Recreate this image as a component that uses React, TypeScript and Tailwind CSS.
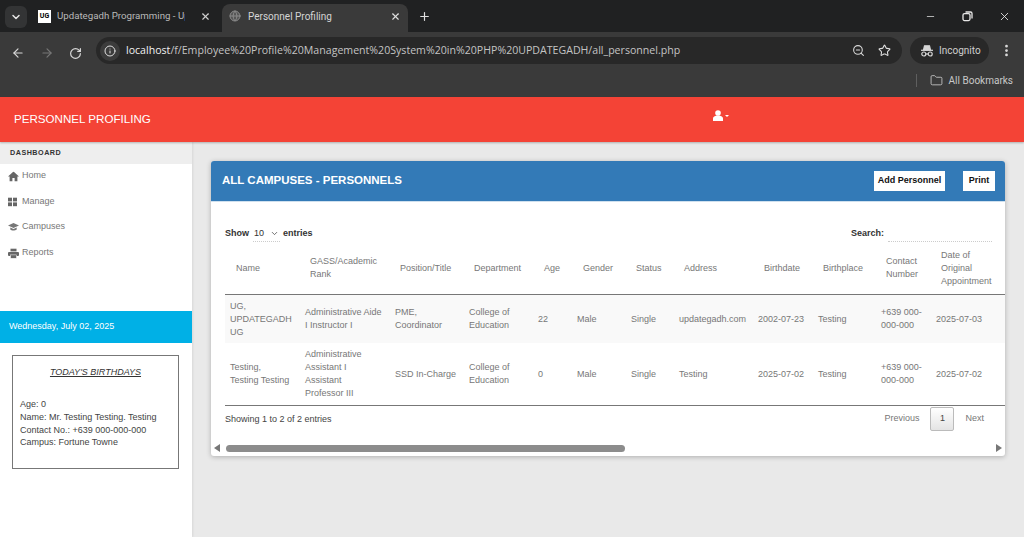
import React from "react";
import { ArrowLeft, ArrowRight, RotateCw, Info, ZoomOut, Star, X, Plus, ChevronDown, Minus, MoreVertical, Folder, Globe } from "lucide-react";

const cols = [75, 90, 74, 69, 39, 54, 48, 79, 60, 63, 55, 74];
const heads: [string[], number][] = [
  [["Name"], 11], [["GASS/Academic", "Rank"], 10], [["Position/Title"], 10], [["Department"], 10], [["Age"], 11], [["Gender"], 11],
  [["Status"], 10], [["Address"], 10], [["Birthdate"], 11], [["Birthplace"], 10], [["Contact", "Number"], 10], [["Date of", "Original", "Appointment"], 10],
];
const rows: string[][][] = [
  [["UG,", "UPDATEGADH", "UG"], ["Administrative Aide", "I Instructor I"], ["PME,", "Coordinator"], ["College of", "Education"], ["22"], ["Male"], ["Single"], ["updategadh.com"], ["2002-07-23"], ["Testing"], ["+639 000-", "000-000"], ["2025-07-03"]],
  [["Testing,", "Testing Testing"], ["Administrative", "Assistant I", "Assistant", "Professor III"], ["SSD In-Charge"], ["College of", "Education"], ["0"], ["Male"], ["Single"], ["Testing"], ["2025-07-02"], ["Testing"], ["+639 000-", "000-000"], ["2025-07-02"]],
];

function Lines({ l }: { l: string[] }) {
  return <>{l.map((s) => <div key={s} className="whitespace-nowrap">{s}</div>)}</>;
}
function Incognito() {
  return (
    <svg width="14" height="14" viewBox="0 0 14 14" fill="none" stroke="#d5d5d5" strokeWidth="1.2">
      <path d="M3.5 6 L4.5 1.8 H9.5 L10.5 6 Z" fill="#d5d5d5" />
      <path d="M1 6.3 H13" />
      <circle cx="3.8" cy="10" r="2" />
      <circle cx="10.2" cy="10" r="2" />
      <path d="M5.8 10 H8.2" />
    </svg>
  );
}
function Restore() {
  return (
    <svg width="11" height="11" viewBox="0 0 11 11" fill="none" stroke="#e8e8e8" strokeWidth="1.3">
      <rect x="1" y="2.6" width="7" height="7" rx="1.5" />
      <path d="M3.5 1 H8.5 A1.5 1.5 0 0 1 10 2.5 V7.5" />
    </svg>
  );
}
function HomeI() {
  return <svg width="11" height="10" viewBox="0 0 11 10" fill="#666"><path d="M5.5 0 L0 5 H1.6 V10 H4.4 V6.6 H6.6 V10 H9.4 V5 H11 Z" /></svg>;
}
function GridI() {
  return <svg width="9" height="9" viewBox="0 0 9 9" fill="#666"><rect width="4" height="4" /><rect x="5" width="4" height="4" /><rect y="5" width="4" height="4" /><rect x="5" y="5" width="4" height="4" /></svg>;
}
function CapI() {
  return <svg width="11" height="9" viewBox="0 0 11 9" fill="#777"><path d="M5.5 0.5 L0 3 L5.5 5.5 L11 3 Z" /><path d="M2.3 5 V7 C3.5 8.4 7 8.4 8.7 7 V5 L5.5 6.5 Z" /></svg>;
}
function PrintI() {
  return <svg width="11" height="10" viewBox="0 0 11 10" fill="#666"><rect x="2.5" y="0" width="6" height="3" /><rect x="0" y="3.5" width="11" height="4" rx="1" /><rect x="2.5" y="6.5" width="6" height="3.5" stroke="#fff" strokeWidth="0.5" /></svg>;
}

export default function App() {
  const nav: [React.ReactNode, string][] = [[<HomeI />, "Home"], [<GridI />, "Manage"], [<CapI />, "Campuses"], [<PrintI />, "Reports"]];
  return (
    <div className="w-[1024px] h-[537px] overflow-hidden flex flex-col bg-[#e9e9e9] font-[Liberation_Sans,Arial,sans-serif]">
      {/* Browser chrome */}
      <div className="h-[32px] bg-[#202122] flex items-end pl-[5px] shrink-0 relative font-[Roboto,sans-serif]">
        <div className="w-[22px] h-[22px] mb-[4px] rounded-md bg-[#333435] flex items-center justify-center">
          <ChevronDown size={12} color="#e5e5e5" strokeWidth={3} />
        </div>
        <div className="w-[195px] h-[32px] flex items-center pl-[11px] text-[9.7px] text-[#b9b9b9]">
          <div className="w-[13px] h-[13px] bg-white text-black text-[7px] font-bold leading-[13px] text-center mr-[6px] shrink-0">UG</div>
          <span className="w-[128px] whitespace-nowrap overflow-hidden">Updategadh Programming - Up</span>
          <X size={11} color="#d0d0d0" strokeWidth={2.5} className="ml-[15px]" />
        </div>
        <div className="w-[186px] h-[28px] bg-[#3a3a3a] rounded-t-lg flex items-center pl-[7px] pb-[4px] text-[10px] text-[#d5d5d5]">
          <Globe size={12} color="#8a8a8a" fill="#555" className="mr-[7px]" />
          <span className="w-[142px] whitespace-nowrap">Personnel Profiling</span>
          <X size={11} color="#e0e0e0" strokeWidth={2.5} />
        </div>
        <div className="h-[32px] flex items-center ml-[10px]">
          <Plus size={13} color="#e0e0e0" strokeWidth={2.2} />
        </div>
        <div className="ml-auto h-[32px] flex items-center pr-[1px]">
          <div className="w-[37px] flex justify-center"><Minus size={11} color="#e8e8e8" strokeWidth={1.6} /></div>
          <div className="w-[37px] flex justify-center"><Restore /></div>
          <div className="w-[37px] flex justify-center"><X size={13} color="#e8e8e8" strokeWidth={1.6} /></div>
        </div>
      </div>
      <div className="h-[65px] bg-[#3a3a3a] shrink-0 flex flex-col font-[Roboto,sans-serif]">
        <div className="h-[32px] mt-[5px] flex items-center pl-[11px] pr-[9px]">
          <ArrowLeft size={14} color="#d8d8d8" strokeWidth={2} />
          <ArrowRight size={14} color="#777" strokeWidth={2} className="ml-[15px]" />
          <RotateCw size={13} color="#d8d8d8" strokeWidth={2.2} className="ml-[15px]" />
        </div>
        <div className="h-[22px] flex items-center justify-end pr-[11px] text-[10px] text-[#c8c8c8]">
          <div className="w-px h-[13px] bg-[#5f5f5f] mr-[13px]" />
          <Folder size={13} color="#d0d0d0" strokeWidth={1.5} className="mr-[6px]" />
          <span>All Bookmarks</span>
        </div>
      </div>
      {/* Address bar (over the toolbar) */}
      <div className="absolute left-[96px] top-[37px] w-[806px] h-[27px] rounded-full bg-[#282828] flex items-center pl-[4px] pr-[11px] font-[Open_Sans,sans-serif]">
        <div className="w-[20px] h-[20px] rounded-full bg-[#3c3c3c] flex items-center justify-center mr-[6px]">
          <Info size={12} color="#e0e0e0" strokeWidth={2} />
        </div>
        <span className="text-[10.6px] text-[#c4c4c4] whitespace-nowrap"><span className="text-[#f0f0f0]">localhost</span>/f/Employee%20Profile%20Management%20System%20in%20PHP%20UPDATEGADH/all_personnel.php</span>
        <ZoomOut size={13} color="#d8d8d8" strokeWidth={2} className="ml-auto" />
        <Star size={13} color="#e0e0e0" strokeWidth={2} className="ml-[13px]" />
      </div>
      <div className="absolute left-[910px] top-[37px] w-[79px] h-[27px] rounded-full bg-[#282828] flex items-center pl-[10px] text-[10px] text-[#cfcfcf] font-[Roboto,sans-serif]">
        <Incognito />
        <span className="ml-[5px]">Incognito</span>
      </div>
      <div className="absolute left-[999px] top-[43px]"><MoreVertical size={15} color="#dcdcdc" strokeWidth={2.4} /></div>

      {/* Page header */}
      <div className="h-[45px] bg-[#f44336] shrink-0 flex items-center pl-[14px] pb-[2px] relative z-10 shadow-[0_1px_2px_rgba(0,0,0,0.25)]">
        <span className="text-[11.6px] text-white">PERSONNEL PROFILING</span>
        <div className="absolute left-[713px] top-[13px] flex items-center">
          <svg width="10" height="11" viewBox="0 0 10 11" fill="#fff"><circle cx="5" cy="3" r="2.8" /><path d="M0 11 V8.5 C0 6.5 2 6 3.5 5.5 H6.5 C8 6 10 6.5 10 8.5 V11 Z" /></svg>
          <span className="ml-[2px] w-0 h-0 border-x-[2.5px] border-x-transparent border-t-[2.5px] border-t-white" />
        </div>
      </div>

      <div className="flex-1 flex min-h-0">
        {/* Sidebar */}
        <aside className="w-[192px] shrink-0 bg-white flex flex-col shadow-[1px_0_2px_rgba(0,0,0,0.08)]">
          <div className="h-[22px] bg-[#eeeeee] pl-[10px] flex items-center text-[7.2px] font-bold tracking-[0.5px] text-[#333]">DASHBOARD</div>
          <div className="flex flex-col h-[128px] pb-[1px] -translate-y-[0.6px]">
            {nav.map(([icon, label]) => (
              <div key={label} className="h-[25.6px] flex items-center pl-[8px] text-[9px] text-[#777]">
                <span className="w-[14px] flex items-center">{icon}</span>
                {label}
              </div>
            ))}
          </div>
          <div className="h-[32px] mt-[19px] bg-[#00b0e6] pl-[9px] flex items-center text-[9px] text-white">Wednesday, July 02, 2025</div>
          <div className="ml-[12px] mt-[12px] w-[167px] h-[114px] border border-[#777] px-[7px] pt-[10px] text-[9px] leading-[12.8px] text-[#444]">
            <div className="text-center italic underline text-[9px] mb-[19px] text-[#333] leading-[13px]">TODAY'S BIRTHDAYS</div>
            <div>Age: 0</div>
            <div>Name: Mr. Testing Testing. Testing</div>
            <div>Contact No.: +639 000-000-000</div>
            <div>Campus: Fortune Towne</div>
          </div>
        </aside>

        {/* Main */}
        <main className="flex-1 min-w-0 pl-[19px] pr-[19px] pt-[19px]">
          <div className="h-[295px] bg-white rounded-[3px] shadow-[0_1px_5px_rgba(0,0,0,0.25)] flex flex-col overflow-hidden">
            <div className="h-[41px] bg-[#337ab7] shrink-0 flex items-center pl-[11px] pr-[10px] border-b border-[#cfe0ee]">
              <span className="text-[11.5px] font-bold text-white">ALL CAMPUSES - PERSONNELS</span>
              <button className="ml-auto h-[20px] w-[71px] bg-white text-[9px] font-bold text-[#111]">Add Personnel</button>
              <button className="ml-[18px] h-[20px] w-[32px] bg-white text-[9px] font-bold text-[#111]">Print</button>
            </div>
            <div className="flex-1 min-h-0 flex flex-col pl-[14px] overflow-hidden">
              <div className="h-[22px] mt-[21px] flex items-center justify-between text-[9px] font-bold text-[#333] pr-[13px] shrink-0">
                <div className="flex items-center">
                  Show
                  <span className="ml-[4px] w-[27px] h-[15px] border-b border-dotted border-[#ccc] flex items-center justify-between pl-[1px] pr-[1px] font-normal">
                    10
                    <ChevronDown size={9} color="#444" />
                  </span>
                  <span className="ml-[3px]">entries</span>
                </div>
                <div className="flex items-center">
                  Search:
                  <span className="ml-[4px] w-[104px] h-[15px] border-b border-dotted border-[#ccc]" />
                </div>
              </div>
              <table className="table-fixed w-[780px] border-collapse shrink-0 text-[9px] leading-[13px] text-[#777] mt-[2px]">
                <colgroup>
                  {cols.map((w, i) => <col key={i} style={{ width: w }} />)}
                </colgroup>
                <thead>
                  <tr className="h-[47px] border-b border-[#777]">
                    {heads.map(([h, p]) => (
                      <th key={h[0]} className="font-normal text-left pb-[4px]" style={{ paddingLeft: p }}><Lines l={h} /></th>
                    ))}
                  </tr>
                </thead>
                <tbody>
                  {rows.map((r, i) => (
                    <tr key={i} className={i === 0 ? "h-[49px] bg-[#f9f9f9]" : "h-[62px] border-b border-[#777]"}>
                      {r.map((c, j) => (
                        <td key={j} className="pl-[5px] pt-[1px] align-middle"><Lines l={c} /></td>
                      ))}
                    </tr>
                  ))}
                </tbody>
              </table>
              <div className="flex justify-between items-start pr-[21px] text-[9px] text-[#444] shrink-0">
                <span className="mt-[7px]">Showing 1 to 2 of 2 entries</span>
                <div className="flex items-center text-[#777] mt-[1px]">
                  <span>Previous</span>
                  <span className="ml-[11px] w-[24px] h-[24px] border border-[#bbb] rounded-[2px] bg-gradient-to-b from-white to-[#e4e4e4] flex items-center justify-center text-[#444]">1</span>
                  <span className="ml-[11px]">Next</span>
                </div>
              </div>
            </div>
            <div className="h-[14px] shrink-0 flex items-center pl-[3px] pr-[3px] mb-[1px]">
              <span className="w-0 h-0 border-y-[4px] border-y-transparent border-r-[6px] border-r-[#777]" />
              <span className="ml-[6px] w-[399px] h-[7px] rounded-full bg-[#8c8c8c]" />
              <span className="ml-auto w-0 h-0 border-y-[4px] border-y-transparent border-l-[6px] border-l-[#777]" />
            </div>
          </div>
        </main>
      </div>
    </div>
  );
}
